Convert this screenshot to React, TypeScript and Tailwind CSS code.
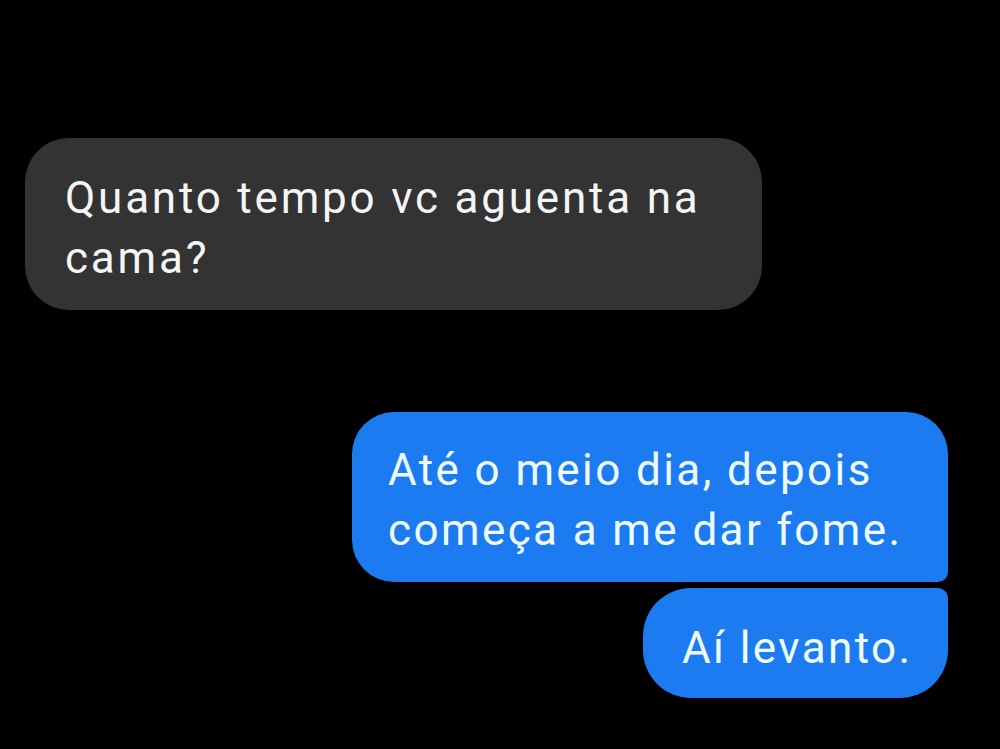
import React from "react"

type BubbleProps = {
  children: React.ReactNode
  className?: string
}

// bolha recebida (cinza, lado esquerdo)
const Received: React.FC<BubbleProps> = ({ children, className }) => (
  <div
    className={`bg-[#333333] text-[#f5f5f5] rounded-[44px] pl-[40px] pr-[30px] pt-[7px] flex items-center ${className ?? ""}`}
  >
    <p className="text-[44px] leading-[60px] tracking-[2.8px]">{children}</p>
  </div>
)

// bolha enviada (azul, lado direito)
const Sent: React.FC<BubbleProps> = ({ children, className }) => (
  <div className={`bg-[#1c7bf1] text-[#eefbff] flex items-center ${className ?? ""}`}>
    <p className="text-[44px] leading-[60px] tracking-[2.4px]">{children}</p>
  </div>
)

const App: React.FC = () => {
  return (
    <div
      className="w-[1000px] h-[749px] bg-black flex flex-col overflow-hidden"
      style={{ fontFamily: "Roboto, 'Noto Sans', sans-serif" }}
    >
      <div className="pt-[138px] pl-[25px]">
        <Received className="w-[737px] h-[172px]">Quanto tempo vc aguenta na cama?</Received>
      </div>

      <div className="mt-[102px] pr-[52px] flex flex-col items-end gap-[6px]">
        <Sent className="w-[596px] h-[170px] pl-[36px] pt-[6px] rounded-t-[42px] rounded-bl-[42px] rounded-br-[10px]">
          Até o meio dia, depois começa a me dar fome.
        </Sent>
        <Sent className="w-[305px] h-[110px] pl-[39px] pt-[10px] rounded-tl-[48px] rounded-bl-[48px] rounded-br-[48px] rounded-tr-[10px]">
          Aí levanto.
        </Sent>
      </div>
    </div>
  )
}

export default App
